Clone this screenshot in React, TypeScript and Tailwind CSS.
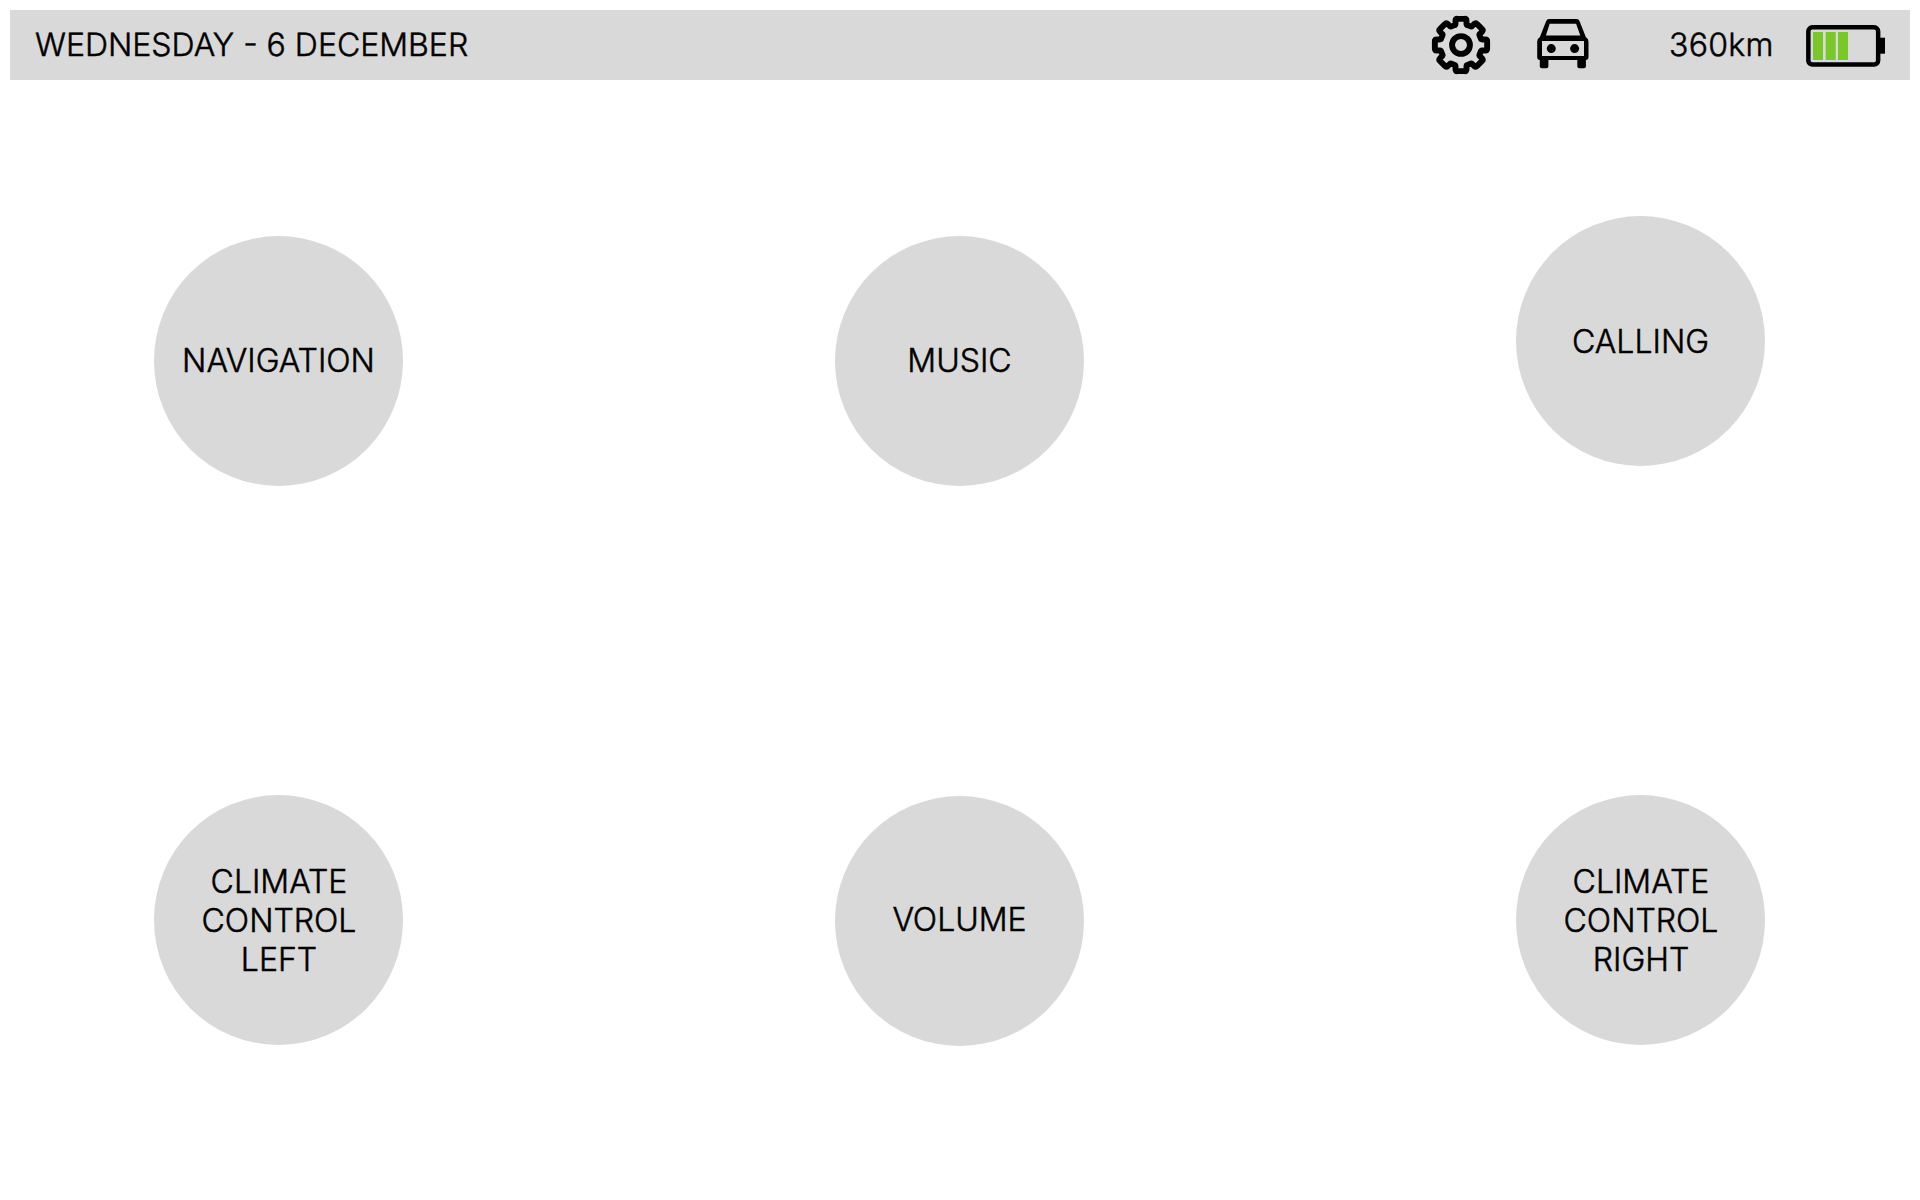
const GEAR_TEETH = 8;

function point(radius: number, degrees: number) {
  const a = (degrees * Math.PI) / 180;
  return `${(radius * Math.sin(a)).toFixed(2)} ${(-radius * Math.cos(a)).toFixed(2)}`;
}

// Closed outline with eight softly rounded teeth around the origin.
function gearPath() {
  const parts: string[] = [];
  for (let i = 0; i < GEAR_TEETH; i++) {
    const a = (i * 360) / GEAR_TEETH;
    parts.push(`${i === 0 ? "M" : "L"}${point(20.9, a - 18)}`);
    parts.push(`Q${point(20.8, a - 15.5)} ${point(22, a - 14.4)}`);
    parts.push(`L${point(24.9, a - 12.8)}`);
    parts.push(`Q${point(27, a - 11.8)} ${point(26.4, a - 8)}`);
    parts.push(`L${point(26.4, a + 8)}`);
    parts.push(`Q${point(27, a + 11.8)} ${point(24.9, a + 12.8)}`);
    parts.push(`L${point(22, a + 14.4)}`);
    parts.push(`Q${point(20.8, a + 15.5)} ${point(20.9, a + 18)}`);
  }
  return parts.join("") + "Z";
}

function GearIcon() {
  return (
    <svg width="60" height="60" viewBox="-30 -30 60 60" fill="none" stroke="black" strokeWidth="5.9" strokeLinejoin="round">
      <path d={gearPath()} />
      <circle r="8.9" />
    </svg>
  );
}

function CarIcon() {
  return (
    <svg width="52" height="50" viewBox="0 0 52 50">
      <path
        fillRule="evenodd"
        d="M12.3 0H39.4Q41.8 0 42.6 2.2L48.9 18.2Q51.5 19.5 51.5 22.5V38Q51.5 41 48.8 41H2.9Q.2 41 .2 38V22.5Q.2 19.5 2.8 18.2L9.1 2.2Q9.9 0 12.3 0ZM12.7 4.7L8.9 16.4H43.3L39.1 4.7ZM5 22V37H47V22Z"
      />
      <rect x="2.8" y="37" width="8.6" height="12.3" rx="2" />
      <rect x="40.3" y="37" width="8.6" height="12.3" rx="2" />
      <circle cx="14.3" cy="29.6" r="4.5" />
      <circle cx="37.6" cy="29.6" r="4.5" />
    </svg>
  );
}

function BatteryIcon() {
  return (
    <svg width="80" height="42" viewBox="0 0 80 42">
      <rect x="2.35" y="2.3" width="69.8" height="37.2" rx="4" fill="none" stroke="black" strokeWidth="4.5" />
      <rect x="73.5" y="12.7" width="5.5" height="16" />
      <g fill="#7ac72a">
        <rect x="7" y="7" width="10" height="28" />
        <rect x="19.7" y="7" width="10" height="28" />
        <rect x="32" y="7" width="10" height="28" />
      </g>
    </svg>
  );
}

type DialProps = { lines: string[]; offset: string; nudge?: string };

function Dial({ lines, offset, nudge = "" }: DialProps) {
  return (
    <button
      className={`flex h-[250px] w-[249px] flex-col items-center justify-center rounded-[50%] bg-[#d9d9d9] text-center ${offset}`}
    >
      {lines.map((line) => (
        <span key={line} className={`block h-[39px] ${nudge}`}>
          {line}
        </span>
      ))}
    </button>
  );
}

export default function App() {
  return (
    <div className="flex h-[1200px] w-[1920px] flex-col bg-white p-2.5 font-['Inter',sans-serif] text-[32px] font-light leading-[39px] text-black [-webkit-text-stroke:0.5px_black] [text-rendering:geometricPrecision]">
      <header className="flex h-[70px] shrink-0 items-center bg-[#d9d9d9] pl-[25px] pr-[24px]">
        <span className="pb-px">WEDNESDAY - 6 DECEMBER</span>
        <div className="ml-auto flex items-center">
          <div className="mr-[46px]">
            <GearIcon />
          </div>
          <div className="mr-[80px] pb-0.5">
            <CarIcon />
          </div>
          <span className="mr-[32px] w-[105px] pb-px tracking-[0.3px]">360km</span>
          <div className="pt-0.5">
            <BatteryIcon />
          </div>
        </div>
      </header>
      <main className="flex flex-col pl-[144px] pr-[145px]">
        <div className="flex h-[579px] items-start justify-between">
          <Dial lines={["NAVIGATION"]} offset="mt-[156px]" nudge="mb-px" />
          <Dial lines={["MUSIC"]} offset="mt-[156px]" nudge="mb-px" />
          <Dial lines={["CALLING"]} offset="mt-[136px]" />
        </div>
        <div className="flex items-start justify-between">
          <Dial lines={["CLIMATE", "CONTROL", "LEFT"]} offset="mt-[136px]" nudge="pl-px" />
          <Dial lines={["VOLUME"]} offset="mt-[137px]" nudge="mb-[3px]" />
          <Dial lines={["CLIMATE", "CONTROL", "RIGHT"]} offset="mt-[136px]" nudge="pl-px" />
        </div>
      </main>
    </div>
  );
}
